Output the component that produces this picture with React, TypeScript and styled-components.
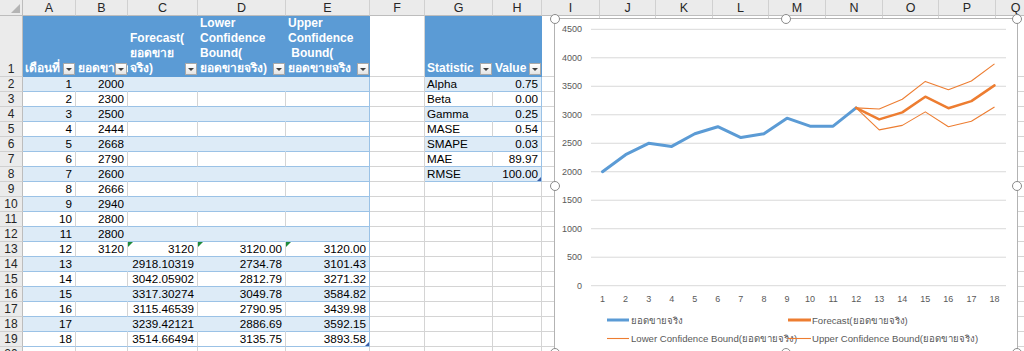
import React from "react";
import styled, { createGlobalStyle } from "styled-components";

const GlobalStyle = createGlobalStyle`
  html, body {
    margin: 0;
    padding: 0;
    background: #fff;
    overflow: hidden;
  }
  body {
    font-family: "Liberation Sans", "Noto Sans", Tahoma, sans-serif;
  }
`;

const LETTERS = "ABCDEFGHIJKLMNOPQ".split("");
const WIDTHS = [53, 52, 70, 88, 84, 55, 68, 49, 58, 56, 57, 56, 57, 57, 56, 57, 40];
const ROWS = 20;

const forecast = ["2918.10319", "3042.05902", "3317.30274", "3115.46539", "3239.42121", "3514.66494"];
const lower = ["2734.78", "2812.79", "3049.78", "2790.95", "2886.69", "3135.75"];
const upper = ["3101.43", "3271.32", "3584.82", "3439.98", "3592.15", "3893.58"];
const actual = [2000, 2300, 2500, 2444, 2668, 2790, 2600, 2666, 2940, 2800, 2800, 3120];
const stats: [string, string][] = [
  ["Alpha", "0.75"],
  ["Beta", "0.00"],
  ["Gamma", "0.25"],
  ["MASE", "0.54"],
  ["SMAPE", "0.03"],
  ["MAE", "89.97"],
  ["RMSE", "100.00"],
];

const headers: Record<number, string[]> = {
  0: ["เดือนที่"],
  1: ["ยอดขายจริง"],
  2: ["Forecast(", "ยอดขาย", "จริง)"],
  3: ["Lower", "Confidence", "Bound(", "ยอดขายจริง)"],
  4: ["Upper", "Confidence", "\u00a0Bound(", "ยอดขายจริง"],
  6: ["Statistic"],
  7: ["Value"],
};

type Kind = "plain" | "band" | "row";

const Sheet = styled.div`
  position: relative;
  width: 1024px;
  height: 351px;
  overflow: hidden;
  display: grid;
  grid-template-columns: 23px ${WIDTHS.map((w) => `${w}px`).join(" ")};
  grid-template-rows: 16px 61px repeat(${ROWS - 1}, 15px);
  font-size: 11.7px;
  color: #000;
`;

const Corner = styled.div`
  position: relative;
  box-sizing: border-box;
  background: #ebebeb;
  border-right: 1px solid #bdbdbd;
  border-bottom: 1px solid #bdbdbd;

  &::after {
    content: "";
    position: absolute;
    right: 2px;
    bottom: 2px;
    border-left: 9px solid transparent;
    border-bottom: 9px solid #b4b4b4;
  }
`;

const ColHead = styled.div`
  box-sizing: border-box;
  background: #ebebeb;
  border-right: 1px solid #d0d0d0;
  border-bottom: 1px solid #bdbdbd;
  display: flex;
  align-items: center;
  justify-content: center;
  font-size: 12.5px;
  color: #262626;
`;

const RowHead = styled.div`
  box-sizing: border-box;
  background: #ebebeb;
  border-right: 1px solid #bdbdbd;
  border-bottom: 1px solid #d0d0d0;
  display: flex;
  align-items: flex-end;
  justify-content: center;
  font-size: 12px;
  line-height: 14px;
  color: #262626;
`;

const Cell = styled.div<{ $kind: Kind; $right?: boolean; $edge?: boolean }>`
  position: relative;
  box-sizing: border-box;
  overflow: hidden;
  white-space: nowrap;
  padding: 0 3px 0 2px;
  line-height: 14px;
  display: flex;
  align-items: flex-end;
  justify-content: ${(p) => (p.$right ? "flex-end" : "flex-start")};
  background: ${(p) => (p.$kind === "band" ? "#ddebf7" : "#fff")};
  border-bottom: 1px solid ${(p) => (p.$kind === "plain" ? "#d4d4d4" : "#9bc2e6")};
  border-right: 1px solid
    ${(p) =>
      p.$edge ? "#9bc2e6" : p.$kind === "band" ? "#ddebf7" : "#d4d4d4"};
`;

const HeadCell = styled.div`
  position: relative;
  box-sizing: border-box;
  overflow: hidden;
  white-space: nowrap;
  padding: 0 2px 1px 2px;
  background: #5b9bd5;
  color: #fff;
  font-weight: bold;
  font-size: 12px;
  line-height: 15px;
  display: flex;
  flex-direction: column;
  justify-content: flex-end;
`;

const FilterButton = styled.span`
  position: absolute;
  right: 1px;
  bottom: 2px;
  width: 12px;
  height: 12px;
  box-sizing: border-box;
  border: 1px solid #a9a9a9;
  background: linear-gradient(#ffffff, #e4e4e4);

  &::after {
    content: "";
    position: absolute;
    left: 2px;
    top: 4px;
    border-left: 3px solid transparent;
    border-right: 3px solid transparent;
    border-top: 3px solid #404040;
  }
`;

const Flag = styled.span`
  position: absolute;
  left: 0;
  top: 0;
  border-top: 5px solid #1f8a3a;
  border-right: 5px solid transparent;
`;

const ResizeMark = styled.span`
  position: absolute;
  right: 0;
  bottom: 0;
  border-bottom: 4px solid #3a5ea8;
  border-left: 4px solid transparent;
`;

const ChartFrame = styled.div`
  position: absolute;
  left: 554px;
  top: 18px;
  width: 462px;
  height: 334px;
  border: 1px solid #b3b3b3;
  background: #fff;
`;

const Handle = styled.span<{ $h: number; $v: number }>`
  position: absolute;
  left: calc(${(p) => p.$h * 100}% - 5px);
  top: calc(${(p) => p.$v * 100}% - 5px);
  width: 8px;
  height: 8px;
  border-radius: 50%;
  border: 1px solid #8a8a8a;
  background: #fff;
`;

const ChartSvg = styled.svg`
  display: block;
  font-family: "Liberation Sans", "Noto Sans", Tahoma, sans-serif;
  font-size: 9px;
`;

const LegendText = styled.text`
  font-size: 9.6px;
  fill: #595959;
`;

const BLUE = "#5b9bd5";
const ORANGE = "#ed7d31";

const yOf = (v: number) => 285.7 - (v * 256.4) / 4500;
const xOf = (i: number) => 591 + (i - 0.5) * (415 / 18);
const pts = (vals: number[], start: number) =>
  vals.map((v, k) => `${xOf(start + k).toFixed(1)},${yOf(v).toFixed(1)}`).join(" ");

const Chart: React.FC = () => {
  const ticks = Array.from({ length: 10 }, (_, i) => i * 500);
  const cats = Array.from({ length: 18 }, (_, i) => i + 1);
  const fc = [3120, ...forecast.map(Number)];
  const lo = [3120, ...lower.map(Number)];
  const up = [3120, ...upper.map(Number)];
  return (
    <ChartFrame>
      <ChartSvg width={462} height={334} viewBox="555 19 462 334">
        {ticks.map((t) => (
          <g key={t}>
            <line x1={591} x2={1006} y1={yOf(t)} y2={yOf(t)} stroke="#d9d9d9" strokeWidth={1} />
            <text x={582} y={yOf(t)} dy="0.33em" textAnchor="end" fill="#595959">
              {t}
            </text>
          </g>
        ))}
        {cats.map((c) => (
          <text key={c} x={xOf(c)} y={302} textAnchor="middle" fill="#595959">
            {c}
          </text>
        ))}
        <polyline points={pts(actual, 1)} fill="none" stroke={BLUE} strokeWidth={3} strokeLinejoin="round" strokeLinecap="round" />
        <polyline points={pts(fc, 12)} fill="none" stroke={ORANGE} strokeWidth={2.5} strokeLinejoin="round" strokeLinecap="round" />
        <polyline points={pts(lo, 12)} fill="none" stroke={ORANGE} strokeWidth={1.1} strokeLinejoin="round" />
        <polyline points={pts(up, 12)} fill="none" stroke={ORANGE} strokeWidth={1.1} strokeLinejoin="round" />

        <line x1={607} x2={629} y1={320} y2={320} stroke={BLUE} strokeWidth={3} />
        <LegendText x={631} y={323.5}>ยอดขายจริง</LegendText>
        <line x1={788} x2={811} y1={320} y2={320} stroke={ORANGE} strokeWidth={3} />
        <LegendText x={812} y={323.5}>Forecast(ยอดขายจริง)</LegendText>
        <line x1={607} x2={629} y1={338.5} y2={338.5} stroke={ORANGE} strokeWidth={1.1} />
        <LegendText x={631} y={342}>Lower Confidence Bound(ยอดขายจริง)</LegendText>
        <line x1={788} x2={811} y1={338.5} y2={338.5} stroke={ORANGE} strokeWidth={1.1} />
        <LegendText x={812} y={342}>Upper Confidence Bound(ยอดขายจริง)</LegendText>
      </ChartSvg>
      {[0, 0.5, 1].flatMap((v) =>
        [0, 0.5, 1]
          .filter((h) => !(h === 0.5 && v === 0.5))
          .map((h) => <Handle key={`${h}-${v}`} $h={h} $v={v} />)
      )}
    </ChartFrame>
  );
};

type Def = { kind: Kind; text?: string; right?: boolean; edge?: boolean; flag?: boolean; mark?: boolean };

function cellDef(r: number, c: number): Def {
  const inLeft = c <= 4 && r >= 2 && r <= 19;
  const inRight = (c === 6 || c === 7) && r >= 2 && r <= 8;
  if (!inLeft && !inRight) return { kind: "plain" };
  const kind: Kind = r % 2 === 0 ? "band" : "row";
  if (inLeft) {
    const i = r - 2;
    let text: string | undefined;
    if (c === 0) text = String(i + 1);
    if (c === 1 && i < actual.length) text = String(actual[i]);
    if (c === 2 && r === 13) text = "3120";
    if (c === 3 && r === 13) text = "3120.00";
    if (c === 4 && r === 13) text = "3120.00";
    if (r >= 14) {
      if (c === 2) text = forecast[r - 14];
      if (c === 3) text = lower[r - 14];
      if (c === 4) text = upper[r - 14];
    }
    return {
      kind,
      text,
      right: true,
      edge: c === 4,
      flag: r === 13 && c >= 2,
      mark: r === 19 && c === 4,
    };
  }
  const [name, value] = stats[r - 2];
  return {
    kind,
    text: c === 6 ? name : value,
    right: c === 7,
    edge: c === 7,
    mark: r === 8 && c === 7,
  };
}

const App: React.FC = () => {
  const cells: React.ReactNode[] = [<Corner key="corner" />];
  LETTERS.forEach((l) => cells.push(<ColHead key={`h${l}`}>{l}</ColHead>));
  for (let r = 1; r <= ROWS; r++) {
    cells.push(<RowHead key={`r${r}`}>{r}</RowHead>);
    LETTERS.forEach((_, c) => {
      const key = `${r}-${c}`;
      if (r === 1 && headers[c]) {
        cells.push(
          <HeadCell key={key}>
            {headers[c].map((line, k) => (
              <div key={k}>{line}</div>
            ))}
            <FilterButton />
          </HeadCell>
        );
        return;
      }
      const d = cellDef(r, c);
      cells.push(
        <Cell key={key} $kind={d.kind} $right={d.right} $edge={d.edge}>
          {d.flag && <Flag />}
          {d.text}
          {d.mark && <ResizeMark />}
        </Cell>
      );
    });
  }
  return (
    <>
      <GlobalStyle />
      <Sheet>
        {cells}
        <Chart />
      </Sheet>
    </>
  );
};

export default App;
